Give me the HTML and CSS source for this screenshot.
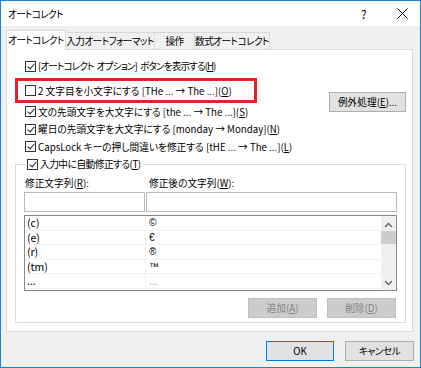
FILE: index.html
```html
<!DOCTYPE html>
<html lang="ja">
<head>
<meta charset="UTF-8">
<title>オートコレクト</title>
<link rel="stylesheet" href="styles.css">
</head>
<body>
    <div class="window">
        <div class="titlebar">
            <span class="title">オートコレクト</span>
            <span class="help">?</span>
            <span class="close">
                <svg width="11" height="11" viewBox="0 0 11 11"><path d="M0.5 0.5 L10.5 10.5 M10.5 0.5 L0.5 10.5" stroke="#000" stroke-width="1" fill="none"/></svg>
            </span>
        </div>

        <div class="tabs">
            <div class="tab active">オートコレクト</div>
            <div class="tab tab-format">入力オートフォーマット</div>
            <div class="tab tab-action">操作</div>
            <div class="tab tab-math">数式オートコレクト</div>
        </div>

        <div class="panel">
            <label class="check-row first"><span class="box checked"></span><span class="tight">[オートコレクト オプション] ボタンを表示する(<u>H</u>)</span></label>

            <div class="middle">
                <div class="rows">
                    <label class="check-row highlight"><span class="box"></span>2 文字目を小文字にする [THe ... → The ...](<u>O</u>)</label>
                    <label class="check-row"><span class="box checked"></span>文の先頭文字を大文字にする [the ... → The ...](<u>S</u>)</label>
                    <label class="check-row"><span class="box checked"></span>曜日の先頭文字を大文字にする [monday → Monday](<u>N</u>)</label>
                    <label class="check-row"><span class="box checked"></span>CapsLock キーの押し間違いを修正する [tHE ... → The ...](<u>L</u>)</label>
                </div>
                <button class="btn exceptions">例外処理(<u>E</u>)...</button>
            </div>

            <fieldset class="group">
                <legend><label class="check-row"><span class="box checked"></span><span class="legend-text">入力中に自動修正する(<u>T</u>)</span></label></legend>

                <div class="field-grid">
                    <span class="field-label">修正文字列(<u>R</u>):</span>
                    <span class="field-label second">修正後の文字列(<u>W</u>):</span>
                    <div class="input"></div>
                    <div class="input"></div>
                </div>

                <div class="list">
                    <div class="list-rows">
                        <div class="list-row"><span class="cell key">(c)</span><span class="cell symbol">&#xA9;&#xFE0E;</span></div>
                        <div class="list-row"><span class="cell key">(e)</span><span class="cell symbol">€</span></div>
                        <div class="list-row"><span class="cell key">(r)</span><span class="cell symbol">&#xAE;&#xFE0E;</span></div>
                        <div class="list-row"><span class="cell key">(tm)</span><span class="cell symbol">&#x2122;&#xFE0E;</span></div>
                        <div class="list-row"><span class="cell key">...</span><span class="cell faint">...</span></div>
                    </div>
                    <div class="scrollbar">
                        <svg class="arrow" width="9" height="6" viewBox="0 0 9 6"><path d="M1 5 L4.5 1.5 L8 5" stroke="#606060" stroke-width="1.3" fill="none"/></svg>
                        <div class="thumb"></div>
                        <svg class="arrow down" width="9" height="6" viewBox="0 0 9 6"><path d="M1 1 L4.5 4.5 L8 1" stroke="#606060" stroke-width="1.3" fill="none"/></svg>
                    </div>
                </div>

                <div class="group-buttons">
                    <button class="btn disabled">追加(<u>A</u>)</button>
                    <button class="btn disabled">削除(<u>D</u>)</button>
                </div>
            </fieldset>
        </div>

        <div class="footer">
            <button class="btn default">OK</button>
            <button class="btn cancel">キャンセル</button>
        </div>
    </div>
</body>
</html>
```

FILE: styles.css
```css
body {
    margin: 0;
    font-family: "Noto Sans CJK JP", sans-serif;
    font-size: 9.7px;
    font-feature-settings: "palt";
    color: #000;
}

.window {
    width: 421px;
    height: 368px;
    box-sizing: border-box;
    border: 1px solid #1883d7;
    background-color: #f0f0f0;
    display: flex;
    flex-direction: column;
}

.titlebar {
    height: 25px;
    background-color: #fff;
    display: flex;
    align-items: center;
    padding-left: 7px;
}

.title {
    font-size: 9.7px;
    letter-spacing: -0.7px;
}

.help {
    margin-left: auto;
    font-size: 12px;
    width: 10px;
    margin-right: 26px;
}

.close {
    display: flex;
    margin-right: 12px;
}

.tabs {
    height: 23px;
    display: flex;
    align-items: flex-end;
    padding-left: 5px;
}

.tab {
    height: 17px;
    box-sizing: border-box;
    border: 1px solid #d9d9d9;
    border-bottom: none;
    margin-left: -1px;
    display: flex;
    align-items: center;
    justify-content: center;
    white-space: nowrap;
    letter-spacing: -0.6px;
}

.tab.active {
    width: 60px;
    height: 20px;
    margin-left: 0;
    margin-bottom: -1px;
    padding-bottom: 2px;
    background-color: #fff;
    position: relative;
    z-index: 1;
}

.tab-format {
    width: 90px;
}

.tab-action {
    width: 41px;
}

.tab-math {
    width: 76px;
}

.panel {
    width: 407px;
    height: 283px;
    box-sizing: border-box;
    margin-left: 5px;
    background-color: #fff;
    border: 1px solid #d9d9d9;
    display: flex;
    flex-direction: column;
}

.check-row {
    display: flex;
    align-items: center;
    height: 17.5px;
    white-space: nowrap;
}

.check-row.first {
    height: 18px;
    margin: 7px 0 0 18px;
}

.tight {
    letter-spacing: -0.95px;
    word-spacing: 2px;
}

.legend-text {
    letter-spacing: -0.5px;
}

.box {
    width: 11px;
    height: 11px;
    box-sizing: border-box;
    border: 1px solid #333;
    background-color: #fff;
    margin-right: 2px;
    flex-shrink: 0;
    position: relative;
}

.box.checked::after {
    content: "";
    position: absolute;
    left: 3px;
    top: 0px;
    width: 3px;
    height: 6px;
    border: solid #222;
    border-width: 0 1px 1px 0;
    transform: rotate(40deg);
}

.middle {
    display: flex;
    justify-content: space-between;
    margin-top: 6px;
}

.rows {
    display: flex;
    flex-direction: column;
    margin-left: 11px;
}

.check-row.highlight {
    width: 236px;
    height: 19px;
    box-sizing: border-box;
    padding-left: 7px;
    outline: 3px solid #e2232b;
    margin-bottom: 3px;
}

.rows .check-row:not(.highlight) {
    padding-left: 7px;
}

.btn {
    font-family: inherit;
    font-size: 9.7px;
    font-feature-settings: "palt";
    color: #000;
    background-color: #e1e1e1;
    border: 1px solid #adadad;
    padding: 0;
    height: 20px;
    box-sizing: border-box;
    cursor: pointer;
}

.btn.exceptions {
    width: 77px;
    margin-top: 11px;
    margin-right: 6px;
}

.btn.disabled {
    width: 69px;
    background-color: #cccccc;
    border-color: #bfbfbf;
    color: #838383;
}

.group {
    width: 391px;
    box-sizing: border-box;
    margin: 0 0 0 8px;
    padding: 0 8px 4px 8px;
    border: 1px solid #dcdcdc;
}

.group legend {
    margin-left: 1px;
    padding: 0 2px;
}

.field-grid {
    display: grid;
    grid-template-columns: 121px 251px;
    column-gap: 1px;
    row-gap: 0;
    margin-top: 2px;
}

.field-label {
    height: 17px;
    line-height: 17px;
    padding-left: 1px;
}

.field-label.second {
    padding-left: 3px;
}

.input {
    height: 20px;
    box-sizing: border-box;
    border: 1px solid #b9b9b9;
    background-color: #fff;
}

.list {
    margin-top: 3px;
    height: 76px;
    box-sizing: border-box;
    border: 1px solid #828790;
    display: flex;
    overflow: hidden;
    font-size: 10.5px;
}

.list-rows {
    flex: 1;
}

.list-row {
    display: grid;
    grid-template-columns: 121px 1fr;
    height: 14.6px;
    box-sizing: border-box;
    border-bottom: 1px solid #f0f0f0;
}

.cell {
    line-height: 13px;
    padding-left: 3px;
    white-space: nowrap;
}

.cell.key {
    border-right: 1px solid #f0f0f0;
    padding-left: 2px;
}

.cell.symbol {
    font-family: "Liberation Sans", sans-serif;
    font-size: 10px;
}

.cell.faint {
    color: #b0b0b0;
}

.scrollbar {
    width: 15px;
    background-color: #f0f0f0;
    display: flex;
    flex-direction: column;
    align-items: center;
}

.arrow {
    margin-top: 6px;
}

.arrow.down {
    margin-top: auto;
    margin-bottom: 4px;
}

.thumb {
    width: 15px;
    height: 13px;
    margin-top: 3px;
    background-color: #cdcdcd;
}

.group-buttons {
    display: flex;
    justify-content: flex-end;
    gap: 10px;
    margin-top: 7px;
    margin-right: 1px;
}

.footer {
    display: flex;
    justify-content: flex-end;
    gap: 11px;
    margin-top: 9px;
    padding-right: 6px;
}

.btn.default {
    width: 68px;
    border-color: #0078d7;
}

.btn.cancel {
    width: 69px;
    letter-spacing: -0.5px;
}
```
